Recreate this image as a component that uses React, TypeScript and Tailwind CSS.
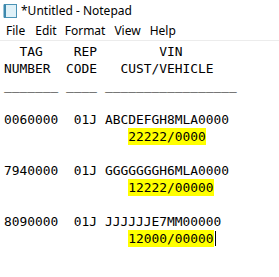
import React from "react";

const mono = { fontFamily: '"DejaVu Sans Mono", "Liberation Mono", monospace' };

function Line({ children }: { children?: React.ReactNode }) {
  return <div className="h-[17px] leading-[17px] whitespace-pre">{children ?? " "}</div>;
}

function Hl({ children, cursor }: { children: React.ReactNode; cursor?: boolean }) {
  return (
    <span className="relative inline-block h-[17px] bg-[#ffff00]">
      {children}
      {cursor && <span className="absolute right-[-2px] top-[1px] h-[15px] w-px bg-black" />}
    </span>
  );
}

export default function App() {
  return (
    <div className="w-[279px] h-[277px] bg-white overflow-hidden text-black" style={{ fontFamily: '"Noto Sans", "Open Sans", sans-serif' }}>
      <div className="h-[21px] flex items-center pl-[3px]">
        <svg width="14" height="14" viewBox="0 0 14 14" className="shrink-0">
          <rect x="1.5" y="0.5" width="12" height="13" fill="#dff1f8" stroke="#4a93b5" />
          <rect x="0.5" y="0.5" width="2.5" height="13" fill="#3b88ad" />
        </svg>
        <span className="ml-[4px] text-[12px] leading-none">*Untitled - Notepad</span>
      </div>
      <div className="h-[19px] flex items-center text-[12px] leading-none">
        <span className="ml-[6px]">File</span>
        <span className="ml-[10px]">Edit</span>
        <span className="ml-[8px]">Format</span>
        <span className="ml-[9px]">View</span>
        <span className="ml-[9px]">Help</span>
      </div>
      <div className="h-px bg-[#ececec]" />
      <div className="pl-[4px] pt-[2px] text-[12.9px] text-black" style={mono}>
        <Line>{"  TAG    REP        VIN"}</Line>
        <Line>{"NUMBER  CODE   CUST/VEHICLE"}</Line>
        <Line>{"_______ ____ _________________"}</Line>
        <Line />
        <Line>{"0060000  01J ABCDEFGH8MLA0000"}</Line>
        <Line>
          {"                "}
          <Hl>22222/0000</Hl>
        </Line>
        <Line />
        <Line>{"7940000  01J GGGGGGGH6MLA0000"}</Line>
        <Line>
          {"                "}
          <Hl>12222/00000</Hl>
        </Line>
        <Line />
        <Line>{"8090000  01J JJJJJJE7MM00000"}</Line>
        <Line>
          {"                "}
          <Hl cursor>12000/00000</Hl>
        </Line>
      </div>
    </div>
  );
}
